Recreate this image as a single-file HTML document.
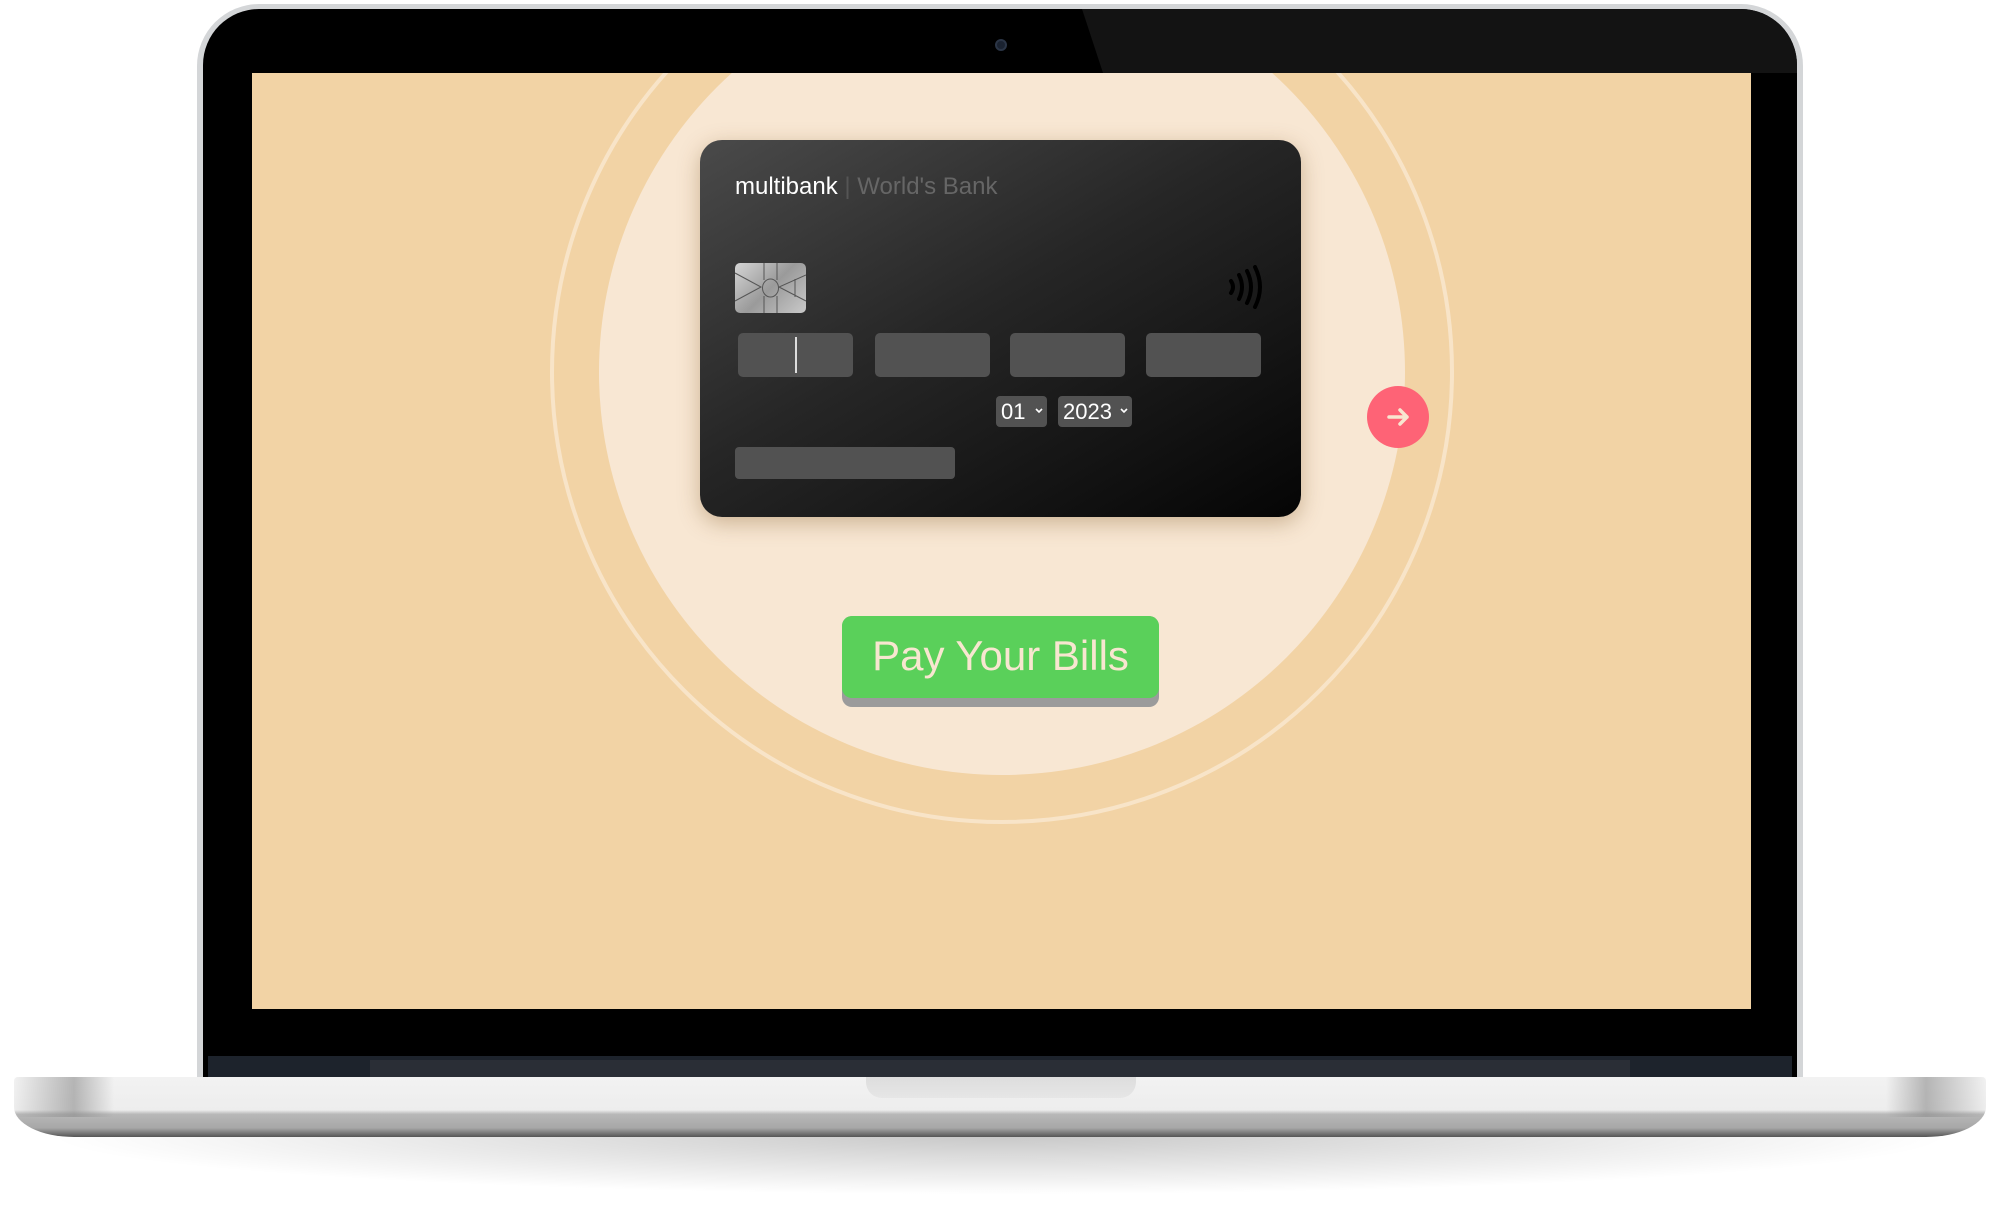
<!DOCTYPE html>
<html><head><meta charset="utf-8"><style>
*{margin:0;padding:0;box-sizing:border-box}
body{width:2000px;height:1208px;background:#fff;position:relative;overflow:hidden;font-family:"Liberation Sans",sans-serif}
.abs{position:absolute}
#lid{left:197px;top:4px;width:1606px;height:1080px;border-radius:62px 62px 0 0;background:#d4d6d8}
#bez{left:203px;top:9px;width:1594px;height:1070px;border-radius:56px 56px 0 0;background:#000;overflow:hidden}
#glare{left:879px;top:0;width:715px;height:64px;background:#131313;clip-path:polygon(0 0,100% 0,100% 100%,21px 100%)}
#strip{left:208px;top:1056px;width:1584px;height:21px;background:#1d232c}
#strip2{left:370px;top:1060px;width:1260px;height:17px;background:#2a2e36}
#screen{left:252px;top:73px;width:1499px;height:936px;background:#f2d3a5;overflow:hidden}
#ring{left:298px;top:-153px;width:904px;height:904px;border-radius:50%;border:4px solid #f8e4c8}
#inner{left:347px;top:-104px;width:806px;height:806px;border-radius:50%;background:#f8e7d3}
#card{left:448px;top:67px;width:601px;height:377px;border-radius:22px;background:linear-gradient(150deg,#4a4a4a 0%,#262626 45%,#050505 100%);box-shadow:0 6px 22px rgba(120,80,30,.35)}
.inp{background:#525252;border-radius:5px;height:44px;top:193px;width:115px}
.sel{top:256px;height:31px;border-radius:4px;background:#525252;color:#fff;font-size:22px;line-height:31px;padding-left:5px}
.sel svg{position:absolute;right:4px;top:12px}
#base{left:14px;top:1077px;width:1972px;height:60px;border-radius:4px 4px 60px 60px/4px 4px 30px 30px;background:linear-gradient(#f2f2f2 0,#ededed 55%,#b8b8b8 62%,#a7a7a7 85%,#555 100%)}
#notch{left:866px;top:1077px;width:270px;height:21px;border-radius:0 0 16px 16px;background:linear-gradient(#ddd,#e6e6e6)}
#shadow{left:40px;top:1135px;width:1920px;height:60px;background:radial-gradient(ellipse at 50% 0,rgba(0,0,0,.22),rgba(0,0,0,0) 70%)}
</style></head><body>
<div id="shadow" class="abs"></div>
<div id="lid" class="abs"></div>
<div id="bez" class="abs"><div id="glare" class="abs"></div></div>
<div class="abs" style="left:995px;top:39px;width:12px;height:12px;border-radius:50%;background:#1a2230;border:2px solid #2b3546"></div>
<div id="strip" class="abs"></div>
<div id="strip2" class="abs"></div>
<div id="screen" class="abs">
 <div id="ring" class="abs"></div>
 <div id="inner" class="abs"></div>
 <div id="card" class="abs">
  <div class="abs" style="left:35px;top:33px;font-size:24px;color:#fff;white-space:nowrap">multibank <span style="color:#555">|</span> <span style="color:#666">World's Bank</span></div>
  <div class="abs" style="left:35px;top:123px;width:71px;height:50px;border-radius:5px;background:linear-gradient(135deg,#d5d5d5,#9a9a9a 50%,#c9c9c9)">
   <svg width="71" height="50" viewBox="0 0 71 50" style="position:absolute;left:0;top:0"><g fill="none" stroke="#555" stroke-width="1"><path d="M0 10 L26 24 L0 38"/><path d="M71 12 L44 24 L71 38"/><path d="M29 0 V17 M42 0 V17 M29 33 V50 M42 33 V50"/><ellipse cx="35.5" cy="25" rx="8" ry="9"/><path d="M60 16 V34"/></g></svg>
  </div>
  <svg class="abs" style="left:527px;top:125px" width="40" height="44" viewBox="0 0 40 44"><g fill="none" stroke="#000" stroke-width="4" stroke-linecap="round"><path d="M4 16 Q8 22 4 28"/><path d="M12 10 Q18 22 12 34"/><path d="M20 6 Q28 22 20 38"/><path d="M28 2 Q38 22 28 42"/></g></svg>
  <div class="abs inp" style="left:38px"><div class="abs" style="left:57px;top:4px;width:2px;height:36px;background:#ddd"></div></div>
  <div class="abs inp" style="left:175px"></div>
  <div class="abs inp" style="left:310px"></div>
  <div class="abs inp" style="left:446px"></div>
  <div class="abs sel" style="left:296px;width:51px">01<svg width="8" height="6" viewBox="0 0 8 6"><path d="M1 1 L4 4 L7 1" fill="none" stroke="#fff" stroke-width="1.6"/></svg></div>
  <div class="abs sel" style="left:358px;width:74px">2023<svg width="8" height="6" viewBox="0 0 8 6"><path d="M1 1 L4 4 L7 1" fill="none" stroke="#fff" stroke-width="1.6"/></svg></div>
  <div class="abs" style="left:35px;top:307px;width:220px;height:32px;border-radius:4px;background:#525252"></div>
 </div>
 <div class="abs" style="left:1115px;top:313px;width:62px;height:62px;border-radius:50%;background:#fe6376">
  <svg width="62" height="62" viewBox="0 0 62 62"><g fill="none" stroke="#f8e6d0" stroke-width="3.5" stroke-linecap="round" stroke-linejoin="round"><path d="M22 31 H40 M33 24 L40 31 L33 38"/></g></svg>
 </div>
 <div class="abs" style="left:590px;top:543px;width:317px;height:91px;border-radius:10px;background:#9b9b9b"></div>
 <div class="abs" style="left:590px;top:543px;width:317px;height:82px;border-radius:10px;background:#5ad05a;color:#f8e6d0;font-size:42px;text-align:center;line-height:80px">Pay Your Bills</div>
</div>
<div id="base" class="abs"></div>
<div class="abs" style="left:14px;top:1077px;width:100px;height:40px;background:linear-gradient(90deg,rgba(150,150,150,0),rgba(140,140,140,.6) 60%,rgba(230,230,230,0))"></div>
<div class="abs" style="left:1886px;top:1077px;width:100px;height:40px;background:linear-gradient(270deg,rgba(150,150,150,0),rgba(140,140,140,.6) 60%,rgba(230,230,230,0))"></div>
<div id="notch" class="abs"></div>
</body></html>
